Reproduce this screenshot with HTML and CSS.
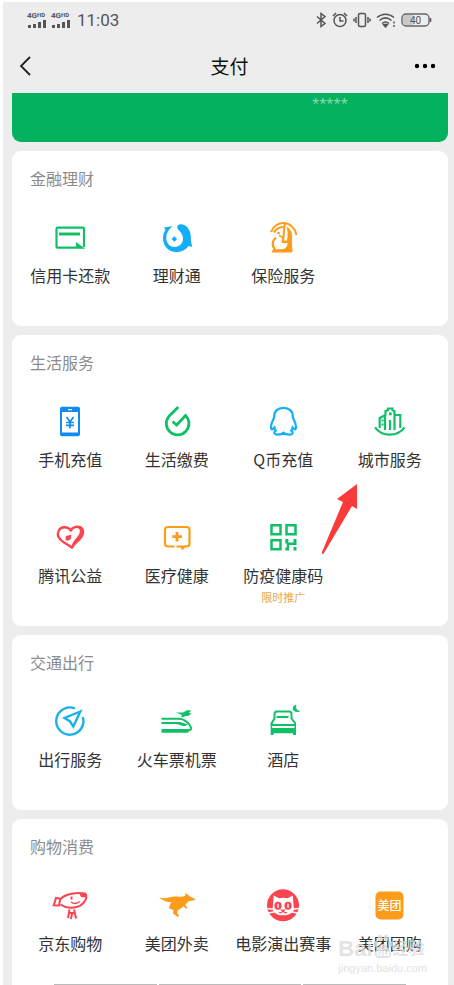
FILE: index.html
```html
<!DOCTYPE html>
<html lang="zh-CN">
<head>
<meta charset="utf-8">
<meta name="viewport" content="width=device-width, initial-scale=1">
<title>支付</title>
<link rel="stylesheet" href="styles.css">
</head>
<body>
<div class="phone">
  <header>
    <div class="status">
      <div class="status-left">
        <span class="signal"><span class="net">4G<small>HD</small></span>
          <svg width="20" height="8" viewBox="0 0 20 8"><path d="M1 5h3v3H1zM6 4h3v4H6zM11 2h3v6h-3zM16 0h3v8h-3z"/></svg></span>
        <span class="signal"><span class="net">4G<small>HD</small></span>
          <svg width="20" height="8" viewBox="0 0 20 8"><path d="M1 5h3v3H1zM6 4h3v4H6zM11 2h3v6h-3zM16 0h3v8h-3z"/></svg></span>
        <span class="time">11:03</span>
      </div>
      <div class="status-right">
        <svg class="line" width="12" height="16" viewBox="0 0 12 16"><path d="M2 4.500l8 7L6 14.500V1.500l4 3-8 7"/></svg>
        <svg class="line" width="16" height="16" viewBox="0 0 16 16"><circle cx="8" cy="8.500" r="6"/><path d="M8 5v4h3.500M1 4l3-3M15 4l-3-3"/></svg>
        <svg class="line" width="18" height="16" viewBox="0 0 18 16"><rect x="5.500" y="1.500" width="7" height="13" rx="1.500"/><path d="M3 5v6M15 5v6M1 6.500v3M17 6.500v3"/></svg>
        <svg class="line" width="20" height="16" viewBox="0 0 20 16"><path d="M1 5.500c5-4.500 12-4.500 17 0M3.500 8.500c4-3.500 8-3.500 12 0M6 11.500c2.500-2 4.500-2 7 0"/><path d="M7.500 12.500h4l-2 2.500z" fill="#555"/><path d="M18 9.500v2M18 13v2"/></svg>
        <svg width="32" height="14" viewBox="0 0 32 14"><rect x="1" y="1" width="27" height="12" rx="4" fill="none" stroke="#666" stroke-width="1.400"/><path d="M5 2h7v10H5q-3 0-3-3V5q0-3 3-3z" fill="#c9c9c9"/><path d="M29.500 5v4" stroke="#555" stroke-width="1.500"/><text x="14.500" y="11" text-anchor="middle" class="battery">40</text></svg>
      </div>
    </div>
    <nav class="nav">
      <button class="icon-button back" aria-label="返回"><svg width="14" height="22" viewBox="0 0 14 22"><path d="M12 2L3 11l9 9" fill="none" stroke="#222" stroke-width="1.800"/></svg></button>
      <h1>支付</h1>
      <button class="icon-button more" aria-label="更多"><svg width="24" height="6" viewBox="0 0 24 6"><circle cx="4" cy="3" r="2.200"/><circle cx="12" cy="3" r="2.200"/><circle cx="20" cy="3" r="2.200"/></svg></button>
    </nav>
  </header>

  <main>
    <div class="wallet"><span class="balance">*****</span></div>

    <section class="card">
      <h2>金融理财</h2>
      <div class="grid">
        <a class="item" href="#"><svg class="icon green" viewBox="0 0 36 36"><path d="M24 27.700H5.500q-1 0-1-1V9q0-1.300 1-1.300h25.500q1 0 1 1.300v18" fill="none" stroke="currentColor" stroke-width="2.200"/><path d="M7 14h21" stroke="currentColor" stroke-width="3"/><path d="M24 22l9.300 6.800H24z"/></svg><span>信用卡还款</span></a>
        <a class="item" href="#"><svg class="icon cyan" viewBox="0 0 36 36"><path d="M18.300 6C20 3.300 25 3.500 28.500 7.500c3 3.500 3.700 8 3.300 13l1.500 6.500-3.800-1C26 31 20 32.500 16 32 8 31 4 25 4 18c0-3 .7-5.500 2.300-7.500L5.300 7.500 13.700 6C9 10 7 14 7.300 19c.5 5 4.200 8 8.200 8 5 0 8.700-4 8.500-8.500-.2-4-2-6.200-4-8C18.500 9 18 7.500 18.300 6z"/><path d="M15.300 16.200l2.800 2.800-2.800 2.800-2.800-2.800z"/></svg><span>理财通</span></a>
        <a class="item" href="#"><svg class="icon orange" viewBox="0 0 36 36"><path d="M6 12C9 5.500 13 3 18.500 3 25 3 30 8 31.500 15M19.700 3.500L18 22" fill="none" stroke="currentColor" stroke-width="2"/><path d="M9 12.500C11 8.500 14.500 7 19 7M11 17.500c-4 3.500-4 8-1 12" fill="none" stroke="currentColor" stroke-width="2.200"/><path d="M21.500 6.500c5 2.500 6 8 5.500 13 0 4 .1 7 .6 11l-1 2H6.500l1.500-3.300h8.500c4 0 6-2.500 6-6.200h-5.800v-2.500H22c1-5 .8-9-.5-14z"/><path d="M14 15.500q4 1 4.500 4.500" fill="none" stroke="currentColor" stroke-width="1.500"/><circle cx="13.500" cy="13" r="1.300"/></svg><span>保险服务</span></a>
      </div>
    </section>

    <section class="card">
      <h2>生活服务</h2>
      <div class="grid">
        <a class="item" href="#"><svg class="icon blue" viewBox="0 0 36 36"><path fill-rule="evenodd" d="M10 2.700h16q2 0 2 2v25.600q0 2-2 2H10q-2 0-2-2V4.700q0-2 2-2zM10 8v20.500h16V8zM16 5v1.300h4V5z"/><path d="M14.500 13l3.500 4.800 3.500-4.800M18 18v6.500M14 18.500h8M14 21.300h8" fill="none" stroke="currentColor" stroke-width="1.700"/></svg><span>手机充值</span></a>
        <a class="item" href="#"><svg class="icon green" viewBox="0 0 36 36"><path d="M19.300 3L10 12.300A11.300 11.300 0 1 0 26.500 11.500L17.700 21 13.500 17.500" fill="none" stroke="currentColor" stroke-width="2.800"/></svg><span>生活缴费</span></a>
        <a class="item" href="#"><svg class="icon cyan" viewBox="0 0 36 36"><path d="M9.200 13C9 7 13 3.800 18.500 3.800S28 7 27.800 13c0 2 3.200 5 3.200 10 0 2-.7 2.600-1.500 2.200L27.700 23.500c-.2 1.400-.8 2.400-1.500 3.200 2.600 1.800 1.500 4-1.700 4-2.800 0-4.500-.3-6-1.800-1.500 1.500-3.200 1.800-6 1.800-3.200 0-4.300-2.200-1.700-4-.7-.8-1.300-1.800-1.500-3.200L7.500 25.200C6.700 25.600 6 25 6 23c0-5 3.200-8 3.200-10z" fill="none" stroke="currentColor" stroke-width="2.200"/></svg><span>Q币充值</span></a>
        <a class="item" href="#"><svg class="icon green" viewBox="0 0 36 36"><path d="M3 23.300c7 9.700 22.500 9.700 29.500 0M7.700 24V14l5.300-2.700V26M13.500 11.500V7l2.500-.8V4.500h4.500v1.700l2 .8v19M22.500 11h5.800v13M18 16v10" fill="none" stroke="currentColor" stroke-width="2.200"/><path d="M17 8.500h2.700v2.700H17zM9.500 15.500h2v2h-2zM9.500 19.500h2v2h-2z"/></svg><span>城市服务</span>
          <svg class="pointer" width="35" height="70" viewBox="0 0 35 70"><path d="M35 0L15 15l6 3L0 68q0 4 2 1L30 22l5 3z"/></svg></a>
        <a class="item" href="#"><svg class="icon red" viewBox="0 0 36 36"><path d="M14 20c1-1 2.500-.5 3.500-1.500 1-1 .5-2.500.5-3.500M18.500 10C15 6 9 6.500 6.800 10.500 4 16 8 20 12 22.500c3.500 2 6 3.500 8.500 5.500" fill="none" stroke="currentColor" stroke-width="2.300"/><path d="M17 10c3-4 8-5.500 11.500-4 5 2.500 4.500 8 1.500 12-3 4-7 6-9.500 11.200L19.300 26c1.700-5 5-7.500 7-10.500 2-3 2.200-6.500-.3-7.300-2.700-.5-5 1.200-7 4z"/><circle cx="15.800" cy="17.700" r="2.300"/></svg><span>腾讯公益</span></a>
        <a class="item" href="#"><svg class="icon orange" viewBox="0 0 36 36"><path d="M15.500 26.500H9q-3 0-3-3V10q0-3 3-3h18.500q3 0 3 3v13.500q0 3-3 3H26" fill="none" stroke="currentColor" stroke-width="2.200"/><path d="M18 12v9.500M13.300 16.700H23" stroke="currentColor" stroke-width="2.800"/><path d="M17.500 25.400H28L23.500 30l-2.200-2.400h-3.800z"/></svg><span>医疗健康</span></a>
        <a class="item" href="#"><svg class="icon green" viewBox="0 0 36 36"><path d="M6.500 5.200h9v9h-9zM21.500 5.200h9v9h-9zM6.500 20.200h9v9h-9z" fill="none" stroke="currentColor" stroke-width="2.500"/><path d="M20.300 19h3v3.500h5.200V19h3v6H24v5.500h-3.700v-3h1.500v-4h-1.500zM28.500 27h3v3.500h-3z"/></svg><span>防疫健康码</span><em>限时推广</em></a>
      </div>
    </section>

    <section class="card">
      <h2>交通出行</h2>
      <div class="grid">
        <a class="item" href="#"><svg class="icon sky" viewBox="0 0 36 36"><path d="M23 4.500A13.600 13.600 0 1 0 30.800 13" fill="none" stroke="currentColor" stroke-width="2.400"/><path d="M28.300 7.500L12.500 14l5.300 3.200 3.500 5.300z" fill="none" stroke="currentColor" stroke-width="2.400"/></svg><span>出行服务</span></a>
        <a class="item" href="#"><svg class="icon green" viewBox="0 0 36 36"><path d="M2.500 14.800H20c5 0 10 4 12 8.500.6 2-.5 3-3 3" fill="none" stroke="currentColor" stroke-width="2"/><path d="M2.500 18H21l8 2.500-3 1.500c-3 .5-5.500-1.800-9-2H2.500zM2.500 25h27l2 1-3 2.700h-26zM17 8.500h7L28 6.300h4l-2 3h3l-3.500 2.500-4 .5-1.500 1-2-.3 1-2z"/></svg><span>火车票机票</span></a>
        <a class="item" href="#"><svg class="icon green" viewBox="0 0 36 36"><path d="M6.700 21v-2L9.500 14.500V10q0-2.500 2.500-2.500h12q2.500 0 2.500 2.500v4.500L30 19v2z" fill="none" stroke="currentColor" stroke-width="2"/><path d="M11.500 12h12v2h-12zM5.700 24h25.300v7H28v-1.800H8.500V31H5.700zM5.700 19h1.500v6H5.700zM29.500 19H31v6h-1.500z"/><path d="M30.700 1c-4 2-3.400 7.500 3.600 6.300-3-.8-4.300-3-3.600-6.300z" stroke="currentColor"/></svg><span>酒店</span></a>
      </div>
    </section>

    <section class="card last">
      <h2>购物消费</h2>
      <div class="grid">
        <a class="item" href="#"><svg class="icon red" viewBox="0 0 36 36"><path d="M8 11.500C13 5.500 25 4 33 5.500c3 3 .5 9-5 12.300C22 20.500 14 20.500 8.500 16.500M8.300 10.800L4 10l-2.200 7.200L7 17.500zM17.500 21.500l-1.500 8.500M22 21.500l2 9M17 25h5.500M20 26l-1 5" fill="none" stroke="currentColor" stroke-width="2"/><path d="M27 5h6.500l1.500 2-2 2.500-4-.5zM18.500 8.500h2v3h-2z"/><path d="M19 14q4 3 9-.5" fill="none" stroke="currentColor" stroke-width="1.500"/></svg><span>京东购物</span></a>
        <a class="item" href="#"><svg class="icon orange" viewBox="0 0 36 36"><path d="M0 9.500c4 1 7 .8 10 0 4-1.200 7-1 10-.7 3 .2 5-.5 6.500-1.600L26 5l2.800 1.600L31 8.500l5 2.400-.5 1.300-5.500 1c-1.700 1-2.700 2.300-3.700 4l2.200 2.500-1.500 1-2.500-2.500c-2 2-4.500 3.300-6 4.300l-.4 2.600 2.100 2.700-1.500 1.300-4.700-3.700.5-3.500-4.500-1.300c.3-3 1.500-4.600 2.300-6.500C8 14.500 3 12 0 9.500z"/></svg><span>美团外卖</span></a>
        <a class="item" href="#"><svg class="icon red" viewBox="0 0 36 36"><circle cx="18" cy="17.300" r="16"/><path d="M8.700 7.500L14 10.300q4-1 8.500 0l5.300-2.800.7 9.500q2 8-5.500 9.700-5 1.200-10 0-7-2-5-9.700z" fill="#fff"/><ellipse cx="13" cy="17.700" rx="3.600" ry="4"/><ellipse cx="23" cy="17.700" rx="3.600" ry="4"/><path d="M13 15.700v4M23 15.700v4M2.500 20.500l6 .8M3.500 25l5.500-1M33.500 20.500l-6 .8M32.500 25l-5.500-1" stroke="#fff" stroke-width="1.400"/><path d="M16.500 22h3L18 23.500zM14 24.500q2.500 1 4-1.500 1.500 2.500 4 1.500" fill="none" stroke="currentColor" stroke-width="1.200"/></svg><span>电影演出赛事</span></a>
        <a class="item" href="#"><svg class="icon orange" viewBox="0 0 36 36"><rect x="3.500" y="3.500" width="28" height="28" rx="5"/><text x="17.500" y="22" text-anchor="middle" class="logo-text">美团</text></svg><span>美团团购</span></a>
      </div>
      <div class="peek"><i></i><i class="wide"></i><i></i></div>
      <div class="watermark" aria-hidden="true">
        <div class="mark-top"><span>Bai</span><svg width="20" height="28" viewBox="0 0 20 28"><ellipse cx="2.500" cy="11" rx="2" ry="3"/><ellipse cx="7" cy="5" rx="2.200" ry="3.500"/><ellipse cx="13" cy="5" rx="2.200" ry="3.500"/><ellipse cx="17.500" cy="11" rx="2" ry="3"/><path d="M10 11c3 0 4 3 6.500 5.500 3.500 4 1.500 9-3 8.500h-7c-4.500.5-6.500-4.500-3-8.500C6 14 7 11 10 11z"/><text x="10" y="23" text-anchor="middle" class="du">du</text></svg><span class="mark-cn">经验</span></div>
        <div class="mark-url">jingyan.baidu.com</div>
      </div>
    </section>
  </main>
</div>
</body>
</html>
```
FILE: styles.css
```css
* {
  box-sizing: border-box;
}

body {
  margin: 0;
  background: #fff;
  color: #333;
  font-family: "Noto Sans CJK SC", sans-serif;
  font-size: 16px;
}

.phone {
  margin: 2px 0 0 3px;
  background: #ededed;
}

.status {
  display: flex;
  justify-content: space-between;
  align-items: center;
  height: 36px;
  padding: 0 21px 0 24px;
}

.status-left,
.status-right {
  display: flex;
  align-items: center;
}

.status-left {
  gap: 4px;
  color: #555;
  font-family: Roboto, sans-serif;
}

.status-right {
  gap: 5px;
}

.signal {
  display: flex;
  flex-direction: column;
  width: 20px;
  fill: #555;
}

.net {
  font-size: 8px;
  font-weight: 700;
  line-height: 8px;
  white-space: nowrap;
}

.net small {
  font-size: 6px;
  vertical-align: top;
  line-height: 6px;
}

.time {
  margin-left: 2px;
  font-size: 17px;
}

.line {
  fill: none;
  stroke: #555;
  stroke-width: 1.5;
}

.battery {
  fill: #555;
  font-family: Roboto, sans-serif;
  font-size: 10px;
}

.nav {
  display: grid;
  grid-template-columns: 60px 1fr 60px;
  align-items: center;
  height: 55px;
  padding-left: 2px;
}

h1 {
  margin: 0;
  color: #111;
  font-size: 19px;
  font-weight: 400;
  line-height: 26px;
  text-align: center;
}

.icon-button {
  display: flex;
  align-items: center;
  height: 40px;
  padding: 0 13px;
  border: 0;
  background: none;
}

.more {
  justify-content: flex-end;
  padding-right: 17px;
}

main {
  display: flex;
  flex-direction: column;
  gap: 9px;
  padding: 0 6px 0 9px;
}

.wallet {
  height: 49px;
  padding-left: 300px;
  border-radius: 0 0 9px 9px;
  background: #04b15e;
}

.balance {
  display: block;
  color: #8fdcb5;
  font-family: "Noto Sans", sans-serif;
  font-size: 13px;
  line-height: 20px;
}

.card {
  border-radius: 9px;
  background: #fff;
}

h2 {
  margin: 0;
  padding: 16px 18px 21px;
  color: #8c8c8c;
  font-size: 16px;
  font-weight: 400;
  line-height: 22px;
}

.grid {
  display: grid;
  grid-template-columns: repeat(4, 1fr);
  padding: 0 5px;
}

.item {
  position: relative;
  display: flex;
  flex-direction: column;
  align-items: center;
  height: 116px;
  padding-top: 10px;
  color: #333;
  line-height: 22px;
  text-decoration: none;
  white-space: nowrap;
}

.icon {
  width: 36px;
  height: 36px;
  margin-bottom: 8px;
  fill: currentColor;
}

.item em {
  margin-top: 3px;
  color: #e9a64a;
  font-size: 11px;
  font-style: normal;
  line-height: 16px;
}

.green {
  color: #10c067;
}

.cyan {
  color: #12aef8;
}

.blue {
  color: #128bf0;
}

.sky {
  color: #1ab0e8;
}

.orange {
  color: #fc9c1a;
}

.red {
  color: #fa4450;
}

.logo-text {
  fill: #fff;
  font-size: 12px;
  font-weight: 500;
}

.pointer {
  position: absolute;
  top: 90px;
  left: -15px;
  fill: #fd3a3a;
}

.last {
  position: relative;
  border-radius: 9px 9px 0 0;
}

.last .item {
  height: 106px;
}

.peek {
  display: grid;
  grid-template-columns: 103fr 142fr 103fr;
  gap: 2px;
  padding: 0 42px;
}

.peek i {
  height: 1px;
  background: #bbb;
}

.watermark {
  position: absolute;
  right: 21px;
  bottom: 10px;
  color: #dcdcdc;
  fill: #dcdcdc;
  font-family: "Liberation Sans", "Noto Sans CJK SC", sans-serif;
  opacity: 0.8;
}

.mark-top {
  display: flex;
  align-items: flex-end;
  font-size: 22px;
  font-weight: 700;
  line-height: 24px;
}

.mark-cn {
  font-size: 16px;
}

.mark-url {
  font-size: 11px;
  line-height: 14px;
}

.du {
  fill: #fff;
  font-size: 11px;
}
```
